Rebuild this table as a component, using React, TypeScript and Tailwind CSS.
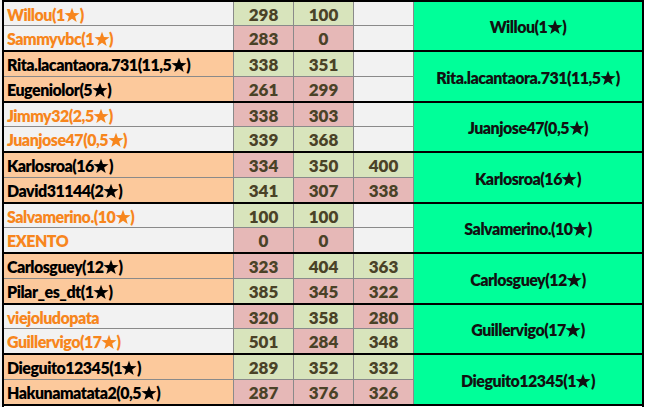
import React from "react";

type Cell = { v: string; c: "g" | "r" | "n" };
type Player = { name: string; orange: boolean; cells: Cell[] };
type Match = { a: Player; b: Player; winner: string; tall: boolean };

const g = (v: string): Cell => ({ v, c: "g" });
const r = (v: string): Cell => ({ v, c: "r" });
const n: Cell = { v: "", c: "n" };

const matches: Match[] = [
  {
    a: { name: "Willou(1★)", orange: true, cells: [g("298"), g("100"), n] },
    b: { name: "Sammyvbc(1★)", orange: true, cells: [r("283"), r("0"), n] },
    winner: "Willou(1★)",
    tall: false,
  },
  {
    a: { name: "Rita.lacantaora.731(11,5★)", orange: false, cells: [g("338"), g("351"), n] },
    b: { name: "Eugeniolor(5★)", orange: false, cells: [r("261"), r("299"), n] },
    winner: "Rita.lacantaora.731(11,5★)",
    tall: true,
  },
  {
    a: { name: "Jimmy32(2,5★)", orange: true, cells: [r("338"), r("303"), n] },
    b: { name: "Juanjose47(0,5★)", orange: true, cells: [g("339"), g("368"), n] },
    winner: "Juanjose47(0,5★)",
    tall: false,
  },
  {
    a: { name: "Karlosroa(16★)", orange: false, cells: [r("334"), g("350"), g("400")] },
    b: { name: "David31144(2★)", orange: false, cells: [g("341"), r("307"), r("338")] },
    winner: "Karlosroa(16★)",
    tall: true,
  },
  {
    a: { name: "Salvamerino.(10★)", orange: true, cells: [g("100"), g("100"), n] },
    b: { name: "EXENTO", orange: true, cells: [r("0"), r("0"), n] },
    winner: "Salvamerino.(10★)",
    tall: false,
  },
  {
    a: { name: "Carlosguey(12★)", orange: false, cells: [r("323"), g("404"), g("363")] },
    b: { name: "Pilar_es_dt(1★)", orange: false, cells: [g("385"), r("345"), r("322")] },
    winner: "Carlosguey(12★)",
    tall: true,
  },
  {
    a: { name: "viejoludopata", orange: true, cells: [r("320"), g("358"), r("280")] },
    b: { name: "Guillervigo(17★)", orange: true, cells: [g("501"), r("284"), g("348")] },
    winner: "Guillervigo(17★)",
    tall: false,
  },
  {
    a: { name: "Dieguito12345(1★)", orange: false, cells: [g("289"), g("352"), g("332")] },
    b: { name: "Hakunamatata2(0,5★)", orange: false, cells: [r("287"), r("376"), r("326")] },
    winner: "Dieguito12345(1★)",
    tall: true,
  },
];

const cellBg = (c: Cell["c"]) =>
  c === "g" ? "bg-[#d8e4bc]" : c === "r" ? "bg-[#e6b8b7]" : "bg-[#f2f2f2]";

const Star = () => (
  <svg viewBox="0 0 24 24" className="inline-block w-[16px] h-[16px] align-[-2px] mx-[-0.5px]" fill="currentColor">
    <polygon points="12,1 14.9,8.9 23.3,9.2 16.7,14.4 19,22.6 12,17.8 5,22.6 7.3,14.4 0.7,9.2 9.1,8.9" />
  </svg>
);

// names keep the star as a drawn glyph, a bit bigger than the letters
const Name = ({ text }: { text: string }) => {
  const parts = text.split("★");
  return (
    <span className="whitespace-nowrap">
      {parts.map((p, i) => (
        <React.Fragment key={i}>
          {p}
          {i < parts.length - 1 && <Star />}
        </React.Fragment>
      ))}
    </span>
  );
};

const Row = ({ p, first, tall }: { p: Player; first: boolean; tall: boolean }) => {
  const h = first ? (tall ? "h-[25px] border-b border-[#8a8a8a]" : "h-[24px] border-b border-[#8a8a8a]") : "h-[24px]";
  return (
    <div className={`flex ${h}`}>
      {/* name column: orange text on grey, or black text on peach */}
      <div
        className={`w-[230px] flex items-center pl-[3px] pt-[2px] border-r border-[#8a8a8a] tracking-[-0.5px] ${
          p.orange ? "bg-[#f2f2f2] text-[#f7861d]" : "bg-[#fcc99c] text-black"
        }`}
      >
        <Name text={p.name} />
      </div>
      {p.cells.map((c, i) => (
        <div
          key={i}
          className={`w-[60px] flex items-center justify-center pt-[2px] border-r border-[#8a8a8a] text-[#4a4227] text-[17px] ${cellBg(c.c)}`}
        >
          {c.v}
        </div>
      ))}
    </div>
  );
};

const App = () => {
  return (
    <div
      className="w-[646px] h-[407px] bg-white flex overflow-hidden text-[16px] font-extrabold"
      style={{ fontFamily: "Lato, 'DejaVu Sans', sans-serif" }}
    >
      <div className="w-[2px] bg-[#f2f2f2]" />
      <div className="w-[642px] border-x-2 border-black flex flex-col">
        {matches.map((m, i) => (
          <div
            key={i}
            className={`flex border-t-2 border-black ${i === matches.length - 1 ? "border-b-2" : ""}`}
          >
            <div className="w-[410px] flex flex-col">
              <Row p={m.a} first={true} tall={m.tall} />
              <Row p={m.b} first={false} tall={m.tall} />
            </div>
            {/* merged winner cell */}
            <div className="w-[228px] bg-[#00ff99] flex items-center justify-center pt-[2px] text-[#111] tracking-[-0.5px]">
              <Name text={m.winner} />
            </div>
          </div>
        ))}
      </div>
    </div>
  );
};

export default App;
